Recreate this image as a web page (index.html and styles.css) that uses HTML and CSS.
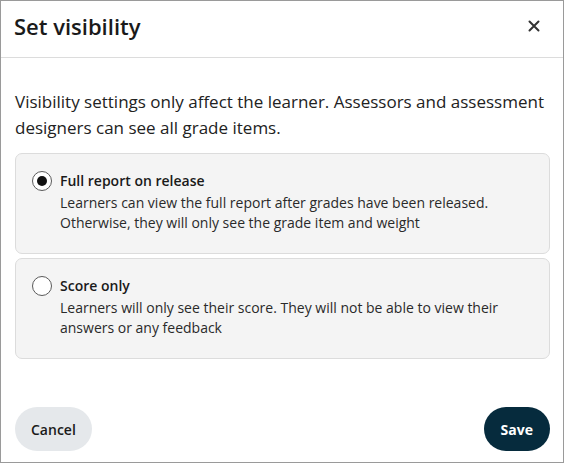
FILE: index.html
```html
<!DOCTYPE html>
<html lang="en">
<head>
    <meta charset="UTF-8">
    <meta name="viewport" content="width=device-width, initial-scale=1.0">
    <title>Set visibility</title>
    <link rel="stylesheet" href="styles.css">
</head>
<body>
    <div class="dialog">
        <div class="dialog-header">
            <h1>Set visibility</h1>
            <button class="close-button" aria-label="Close">
                <svg width="12" height="12" viewBox="0 0 12 12">
                    <path d="M1.5 1.5 L10.5 10.5 M10.5 1.5 L1.5 10.5" stroke="#333" stroke-width="2" stroke-linecap="round"/>
                </svg>
            </button>
        </div>
        <div class="dialog-body">
            <p class="intro">Visibility settings only affect the learner. Assessors and assessment designers can see all grade items.</p>
            <label class="option">
                <input type="radio" name="visibility" checked>
                <span class="radio"></span>
                <span class="option-text">
                    <span class="option-title">Full report on release</span>
                    <span class="option-desc">Learners can view the full report after grades have been released. Otherwise, they will only see the grade item and weight</span>
                </span>
            </label>
            <label class="option">
                <input type="radio" name="visibility">
                <span class="radio"></span>
                <span class="option-text">
                    <span class="option-title">Score only</span>
                    <span class="option-desc">Learners will only see their score. They will not be able to view their answers or any feedback</span>
                </span>
            </label>
        </div>
        <div class="dialog-footer">
            <button class="btn btn-secondary">Cancel</button>
            <button class="btn btn-primary">Save</button>
        </div>
    </div>
</body>
</html>
```

FILE: styles.css
```css
* {
    box-sizing: border-box;
}
body {
    margin: 0;
    font-family: "Open Sans", Arial, sans-serif;
    color: #1c1c1c;
    background: #fff;
}
.dialog {
    width: 564px;
    height: 463px;
    border: 1px solid #9a9a9a;
    display: flex;
    flex-direction: column;
}
.dialog-header {
    height: 57px;
    border-bottom: 1px solid #dcdcdc;
    padding: 0 14px 6px 13px;
    display: flex;
    align-items: center;
    justify-content: space-between;
}
.dialog-header h1 {
    margin: 0;
    font-size: 22px;
    font-weight: 600;
    color: #1a1a1a;
}
.close-button {
    background: none;
    border: none;
    padding: 4px;
    margin-right: 5px;
    cursor: pointer;
    display: flex;
}
.dialog-body {
    padding: 31px 13px 0 14px;
    flex: 1;
}
.intro {
    margin: 0 0 12px;
    font-size: 17px;
    line-height: 26px;
    color: #222;
}
.option {
    display: flex;
    gap: 8px;
    background: #f4f4f4;
    border: 1px solid #dcdcdc;
    border-radius: 7px;
    padding: 17px 16px 20px;
    margin-bottom: 4px;
    cursor: pointer;
}
.option input {
    display: none;
}
.radio {
    flex: none;
    width: 20px;
    height: 20px;
    border: 1.5px solid #5a5a5a;
    border-radius: 50%;
    background: #fff;
    display: flex;
    align-items: center;
    justify-content: center;
}
.option input:checked + .radio::after {
    content: "";
    width: 10px;
    height: 10px;
    border-radius: 50%;
    background: #111;
}
.option-text {
    display: flex;
    flex-direction: column;
    font-size: 14px;
    line-height: 20px;
}
.option-title {
    font-weight: 600;
    color: #1a1a1a;
    margin-bottom: 2px;
}
.option-desc {
    color: #2a2a2a;
}
.dialog-footer {
    display: flex;
    justify-content: space-between;
    padding: 0 13px 11px 14px;
}
.btn {
    height: 44px;
    border: none;
    border-radius: 22px;
    padding: 0 16px;
    font-family: "Open Sans", Arial, sans-serif;
    font-size: 14px;
    font-weight: 600;
    cursor: pointer;
}
.btn-secondary {
    background: #e5e8eb;
    color: #1a1a1a;
}
.btn-primary {
    background: #062b3d;
    color: #fff;
    font-weight: 700;
    padding: 0 17px;
}
```
